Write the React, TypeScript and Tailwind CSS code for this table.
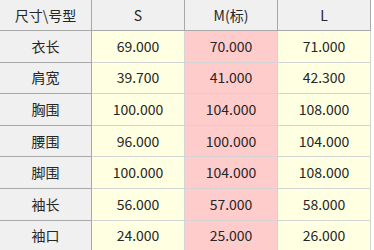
const sizes = ["S", "M(标)", "L"];

const rows: { name: string; values: string[] }[] = [
  { name: "衣长", values: ["69.000", "70.000", "71.000"] },
  { name: "肩宽", values: ["39.700", "41.000", "42.300"] },
  { name: "胸围", values: ["100.000", "104.000", "108.000"] },
  { name: "腰围", values: ["96.000", "100.000", "104.000"] },
  { name: "脚围", values: ["100.000", "104.000", "108.000"] },
  { name: "袖长", values: ["56.000", "57.000", "58.000"] },
  { name: "袖口", values: ["24.000", "25.000", "26.000"] },
];

export default function App() {
  return (
    <div
      className="w-[374px] h-[250px] overflow-hidden bg-white text-[14px] text-[#262626]"
      style={{ fontFamily: '"Noto Sans CJK SC", "Noto Sans", sans-serif' }}
    >
      {/* Header */}
      <div className="grid grid-cols-[92px_93px_93px_93px] h-[31px]">
        <div className="flex items-center justify-center bg-[#f0f0f0] border-r border-b border-[#a8a8a8]">
          尺寸\号型
        </div>
        {sizes.map((s) => (
          <div
            key={s}
            className="flex items-center justify-center bg-[#f0f0f0] border-r border-b border-[#a8a8a8]"
          >
            {s}
          </div>
        ))}
      </div>

      {/* Body */}
      {rows.map((row) => (
        <div
          key={row.name}
          className="grid grid-cols-[92px_93px_93px_93px] h-[31.6px]"
        >
          <div className="flex items-center justify-center bg-[#f0f0f0] border-r border-b border-[#a8a8a8]">
            {row.name}
          </div>
          {row.values.map((v, i) => (
            <div
              key={i}
              className={
                i === 1
                  ? "flex items-center justify-center bg-[#ffcccc] border-r border-b border-[#d4d4d4]"
                  : "flex items-center justify-center bg-[#ffffe1] border-r border-b border-[#d4d4d4]"
              }
            >
              {v}
            </div>
          ))}
        </div>
      ))}
    </div>
  );
}
